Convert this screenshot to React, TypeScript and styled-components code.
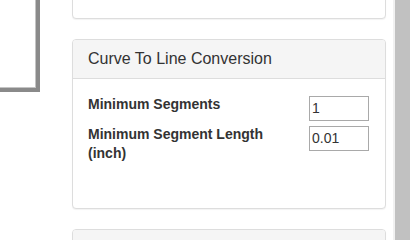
import React from 'react'
import styled, { createGlobalStyle } from 'styled-components'

const GlobalStyle = createGlobalStyle`
  html, body {
    margin: 0;
    padding: 0;
    background: #fff;
    overflow: hidden;
  }
  body {
    font-family: "Liberation Sans", Arial, Helvetica, sans-serif;
    font-size: 14px;
    line-height: 1.42857;
    color: #333;
  }
  * {
    box-sizing: border-box;
  }
`

const Window = styled.div`
  display: flex;
  width: 410px;
  height: 240px;
  overflow: hidden;
`

const Viewport = styled.div`
  flex: 1;
  overflow: hidden;
`

// page is scrolled down, so the content starts above the visible area
const Content = styled.div`
  display: flex;
  gap: 32px;
  margin-top: -60px;
`

const CanvasColumn = styled.div`
  width: 40px;
  display: flex;
  justify-content: flex-end;
  overflow: hidden;
`

const Canvas = styled.div`
  flex: 0 0 300px;
  height: 152px;
  background: #fff;
  border: 4px solid #8a8a8a;
  box-shadow: inset -1px -1px 0 #c4c4c4;
`

const PanelColumn = styled.div`
  width: 314px;
  display: flex;
  flex-direction: column;
`

const Panel = styled.div`
  margin-bottom: 20px;
  background: #fff;
  border: 1px solid #ddd;
  border-radius: 4px;
  box-shadow: 0 1px 1px rgba(0, 0, 0, 0.05);
`

const PanelHeading = styled.div`
  padding: 10px 15px;
  background: #f5f5f5;
  border-bottom: 1px solid #ddd;
  border-top-left-radius: 3px;
  border-top-right-radius: 3px;
`

const PanelTitle = styled.h3`
  margin: 0;
  font-size: 16px;
  font-weight: normal;
  line-height: 1.1;
  color: #333;
`

const PanelBody = styled.div<{ $minHeight: number }>`
  padding: 15px;
  min-height: ${({ $minHeight }) => $minHeight}px;
`

const FieldRow = styled.div`
  display: flex;
  align-items: flex-start;
  margin-bottom: 3px;
`

const FieldLabel = styled.label`
  width: 178px;
  padding-top: 1px;
  font-weight: bold;
  font-size: 14px;
  line-height: 19px;
  color: #333;
`

const NumberInput = styled.input`
  margin: 2px 1px 0 auto;
  width: 60px;
  height: 25px;
  padding: 1px 2px;
  border: 1px solid #a9a9a9;
  font-family: "Liberation Sans", Arial, sans-serif;
  font-size: 14px;
  color: #333;
  background: #fff;
  outline: none;
`

const Scrollbar = styled.div`
  width: 17px;
  height: 240px;
  background: #f1f1f1;
  display: flex;
  padding-left: 2px;
`

const Thumb = styled.div`
  flex: 1;
  background: #c1c1c1;
`

const fields = [
  { label: 'Minimum Segments', value: '1' },
  { label: 'Minimum Segment Length (inch)', value: '0.01' },
]

const App: React.FC = () => {
  return (
    <>
      <GlobalStyle />
      <Window>
        <Viewport>
          <Content>
            <CanvasColumn>
              <Canvas />
            </CanvasColumn>
            <PanelColumn>
              <Panel>
                <PanelBody $minHeight={77} />
              </Panel>
              <Panel>
                <PanelHeading>
                  <PanelTitle>Curve To Line Conversion</PanelTitle>
                </PanelHeading>
                <PanelBody $minHeight={129}>
                  {fields.map((f) => (
                    <FieldRow key={f.label}>
                      <FieldLabel>{f.label}</FieldLabel>
                      <NumberInput type="text" defaultValue={f.value} />
                    </FieldRow>
                  ))}
                </PanelBody>
              </Panel>
              <Panel>
                <PanelHeading>
                  <PanelTitle>&nbsp;</PanelTitle>
                </PanelHeading>
                <PanelBody $minHeight={60} />
              </Panel>
            </PanelColumn>
          </Content>
        </Viewport>
        <Scrollbar>
          <Thumb />
        </Scrollbar>
      </Window>
    </>
  )
}

export default App
